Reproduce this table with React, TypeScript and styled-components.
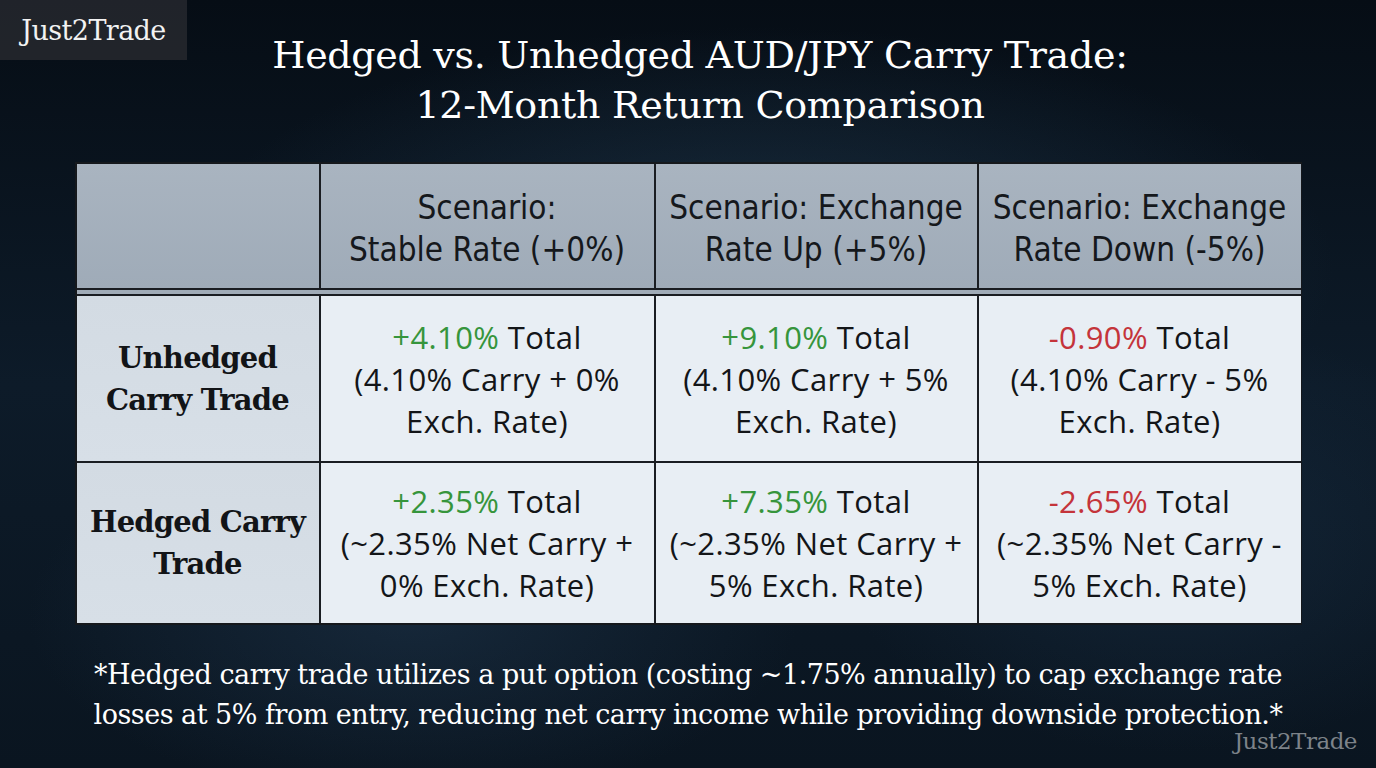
import React from "react";
import styled, { createGlobalStyle } from "styled-components";

const GlobalStyle = createGlobalStyle`
  html, body {
    margin: 0;
    padding: 0;
    width: 1376px;
    height: 768px;
    overflow: hidden;
  }
`;

type Part = { text: string; tone?: "up" | "down" };

type Cell = {
  lead: Part;
  rest: string[];
};

type Row = {
  label: string[];
  cells: Cell[];
};

const scenarios = [
  ["Scenario:", "Stable Rate (+0%)"],
  ["Scenario: Exchange", "Rate Up (+5%)"],
  ["Scenario: Exchange", "Rate Down (-5%)"],
];

const rows: Row[] = [
  {
    label: ["Unhedged", "Carry Trade"],
    cells: [
      { lead: { text: "+4.10%", tone: "up" }, rest: ["(4.10% Carry + 0%", "Exch. Rate)"] },
      { lead: { text: "+9.10%", tone: "up" }, rest: ["(4.10% Carry + 5%", "Exch. Rate)"] },
      { lead: { text: "-0.90%", tone: "down" }, rest: ["(4.10% Carry - 5%", "Exch. Rate)"] },
    ],
  },
  {
    label: ["Hedged Carry", "Trade"],
    cells: [
      { lead: { text: "+2.35%", tone: "up" }, rest: ["(~2.35% Net Carry +", "0% Exch. Rate)"] },
      { lead: { text: "+7.35%", tone: "up" }, rest: ["(~2.35% Net Carry +", "5% Exch. Rate)"] },
      { lead: { text: "-2.65%", tone: "down" }, rest: ["(~2.35% Net Carry -", "5% Exch. Rate)"] },
    ],
  },
];

const Page = styled.div`
  position: relative;
  width: 1376px;
  height: 768px;
  overflow: hidden;
  background:
    radial-gradient(ellipse 60% 45% at 55% 35%, rgba(40, 70, 95, 0.5), rgba(20, 40, 60, 0) 70%),
    radial-gradient(ellipse 40% 35% at 30% 80%, rgba(35, 60, 85, 0.45), rgba(20, 40, 60, 0) 70%),
    radial-gradient(ellipse 35% 40% at 85% 70%, rgba(30, 55, 80, 0.4), rgba(20, 40, 60, 0) 70%),
    linear-gradient(180deg, #060d15 0%, #0d1b29 50%, #0a1520 100%);
  font-family: "DejaVu Serif", "Liberation Serif", serif;
  color: #ffffff;
  display: flex;
  flex-direction: column;
  align-items: center;
`;

const Badge = styled.div`
  position: absolute;
  left: 0;
  top: 0;
  width: 187px;
  height: 60px;
  background: rgba(38, 40, 46, 0.85);
  display: flex;
  align-items: center;
  justify-content: center;
  font-family: "DejaVu Serif", serif;
  font-size: 27px;
  color: #f2f2f2;
  letter-spacing: -0.6px;
`;

const Mark = styled.div`
  position: absolute;
  right: 19px;
  bottom: 14px;
  font-family: "DejaVu Serif", serif;
  font-size: 23px;
  color: #7d8389;
  letter-spacing: -0.5px;
`;

const Title = styled.h1`
  margin: 30px 0 0 0;
  padding-left: 24px;
  font-family: "DejaVu Serif", serif;
  font-weight: 400;
  font-size: 38px;
  line-height: 50px;
  text-align: center;
  letter-spacing: -0.3px;
`;

const Table = styled.div`
  margin-top: 32px;
  display: grid;
  grid-template-columns: 242px 335px 323px 324px;
  grid-template-rows: 126px 6px 167px 160px;
  background: #1a1d22;
  border: 2px solid #15181c;
  border-right-width: 1px;
  width: 1224px;
  box-sizing: content-box;
`;

const HeadCell = styled.div<{ $first?: boolean }>`
  background: linear-gradient(180deg, #a9b4c0 0%, #9fabb8 100%);
  border-left: ${(p) => (p.$first ? "none" : "2px solid #1a1d22")};
  border-bottom: 2px solid #1a1d22;
  display: flex;
  flex-direction: column;
  justify-content: center;
  align-items: center;
  padding-top: 6px;
  font-family: "DejaVu Sans Condensed", "Liberation Sans Narrow", "Roboto", sans-serif;
  font-size: 33px;
  line-height: 42px;
  color: #15181c;
  text-align: center;
  white-space: nowrap;
  letter-spacing: 0px;
`;

const Divider = styled.div`
  grid-column: 1 / -1;
  background: #a0abb7;
  border-bottom: 2px solid #1a1d22;
`;

const LabelCell = styled.div<{ $last?: boolean }>`
  background: linear-gradient(180deg, #d3dbe3 0%, #d7dfe7 100%);
  border-bottom: ${(p) => (p.$last ? "none" : "2px solid #1a1d22")};
  display: flex;
  flex-direction: column;
  align-items: center;
  justify-content: center;
  font-family: "DejaVu Serif", "Liberation Serif", serif;
  font-weight: 700;
  font-size: 29px;
  line-height: 42px;
  color: #121417;
  letter-spacing: -0.8px;
  text-align: center;
`;

const DataCell = styled.div<{ $last?: boolean }>`
  background: #e8eef4;
  border-left: 2px solid #1a1d22;
  border-bottom: ${(p) => (p.$last ? "none" : "2px solid #1a1d22")};
  display: flex;
  flex-direction: column;
  align-items: center;
  justify-content: center;
  font-family: "Open Sans", "Roboto", sans-serif;
  font-size: 31px;
  line-height: 42px;
  color: #131518;
  text-align: center;
  white-space: nowrap;
  letter-spacing: 0.4px;
`;

const Figure = styled.span<{ $tone?: "up" | "down" }>`
  color: ${(p) => (p.$tone === "down" ? "#c4343a" : "#36953c")};
`;

const Note = styled.p`
  margin: 30px 0 0 0;
  font-family: "DejaVu Serif", serif;
  font-size: 27px;
  line-height: 40px;
  text-align: center;
  letter-spacing: -0.5px;
`;

export default function App() {
  return (
    <Page>
      <GlobalStyle />
      <Badge>Just2Trade</Badge>
      <Title>
        Hedged vs. Unhedged AUD/JPY Carry Trade:
        <br />
        12-Month Return Comparison
      </Title>
      <Table>
        <HeadCell $first />
        {scenarios.map((s, i) => (
          <HeadCell key={i}>
            <div>{s[0]}</div>
            <div>{s[1]}</div>
          </HeadCell>
        ))}
        <Divider />
        {rows.map((row, r) => {
          const last = r === rows.length - 1;
          return (
            <React.Fragment key={r}>
              <LabelCell $last={last}>
                {row.label.map((l, i) => (
                  <div key={i}>{l}</div>
                ))}
              </LabelCell>
              {row.cells.map((c, i) => (
                <DataCell key={i} $last={last}>
                  <div>
                    <Figure $tone={c.lead.tone}>{c.lead.text}</Figure> Total
                  </div>
                  {c.rest.map((t, j) => (
                    <div key={j}>{t}</div>
                  ))}
                </DataCell>
              ))}
            </React.Fragment>
          );
        })}
      </Table>
      <Note>
        *Hedged carry trade utilizes a put option (costing ~1.75% annually) to cap exchange rate
        <br />
        losses at 5% from entry, reducing net carry income while providing downside protection.*
      </Note>
      <Mark>Just2Trade</Mark>
    </Page>
  );
}
